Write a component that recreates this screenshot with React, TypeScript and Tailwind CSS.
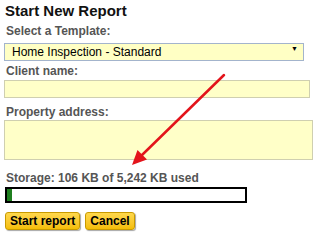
import { useState } from "react";

const USED_KB = 106;
const TOTAL_KB = 5242;

export default function App() {
  const [template, setTemplate] = useState("standard");
  const pct = (USED_KB / TOTAL_KB) * 100;

  return (
    <div className="relative w-[321px] h-[242px] overflow-hidden bg-white pl-[4px] pt-[2px] font-['Liberation_Sans',Arial,sans-serif]">
      <h1 className="text-[15px] leading-[18px] font-bold text-[#111] pl-[1px]">
        Start New Report
      </h1>

      <label className="block mt-[4px] text-[12px] leading-[14px] font-bold text-[#555] pl-[2px]">
        Select a Template:
      </label>
      <div className="relative mt-[1px] w-[300px] h-[18px]">
        <select
          value={template}
          onChange={(e) => setTemplate(e.target.value)}
          className="appearance-none w-full h-full bg-[#ffffc4] border border-[#a3b4cc] pl-[7px] text-[12px] leading-[16px] text-black outline-none"
        >
          <option value="standard">Home Inspection - Standard</option>
          <option value="commercial">Commercial Inspection</option>
        </select>
        <span className="pointer-events-none absolute right-[6px] top-[6px] text-[7px] leading-[7px] text-black">
          ▼
        </span>
      </div>

      <label className="block mt-[7px] text-[12px] leading-[14px] font-bold text-[#555] pl-[2px]">
        Client name:
      </label>
      <input
        className="block mt-[2px] w-[306px] h-[18px] bg-[#ffffc8] border border-[#cfcfb0] outline-none px-[3px] text-[12px]"
      />

      <label className="block mt-[7px] text-[12px] leading-[14px] font-bold text-[#555] pl-[2px]">
        Property address:
      </label>
      <textarea className="block mt-[1px] w-[309px] h-[40px] resize-none bg-[#ffffc8] border border-[#cfcfb0] outline-none px-[3px] text-[12px]" />

      <div className="mt-[11px] text-[12px] leading-[14px] font-bold text-[#555] pl-[2px]">
        Storage: {USED_KB} KB of {TOTAL_KB.toLocaleString("en-US")} KB used
      </div>
      <div className="mt-[2px] ml-[1px] w-[242px] h-[16px] border-2 border-black bg-white">
        <div className="h-full bg-[#1f7f1f]" style={{ width: `${pct}%` }} />
      </div>

      <div className="flex gap-[5px] mt-[9px] pl-[1px]">
        <button className="h-[18px] px-[4px] rounded-[3px] border border-[#c99a00] bg-gradient-to-b from-[#ffd84a] to-[#f5be00] text-[12px] leading-[16px] font-bold text-black shadow-[1px_1px_1px_rgba(0,0,0,0.35)]">
          Start report
        </button>
        <button className="h-[18px] px-[4px] rounded-[3px] border border-[#c99a00] bg-gradient-to-b from-[#ffd84a] to-[#f5be00] text-[12px] leading-[16px] font-bold text-black shadow-[1px_1px_1px_rgba(0,0,0,0.35)]">
          Cancel
        </button>
      </div>

      <svg
        className="pointer-events-none absolute inset-0"
        width="321"
        height="242"
        viewBox="0 0 321 242"
      >
        <line x1="224" y1="75" x2="141" y2="156" stroke="#e3141b" strokeWidth="2.5" strokeLinecap="round" />
        <polygon points="132,165 147,159.5 137.5,150" fill="#e3141b" />
      </svg>
    </div>
  );
}
